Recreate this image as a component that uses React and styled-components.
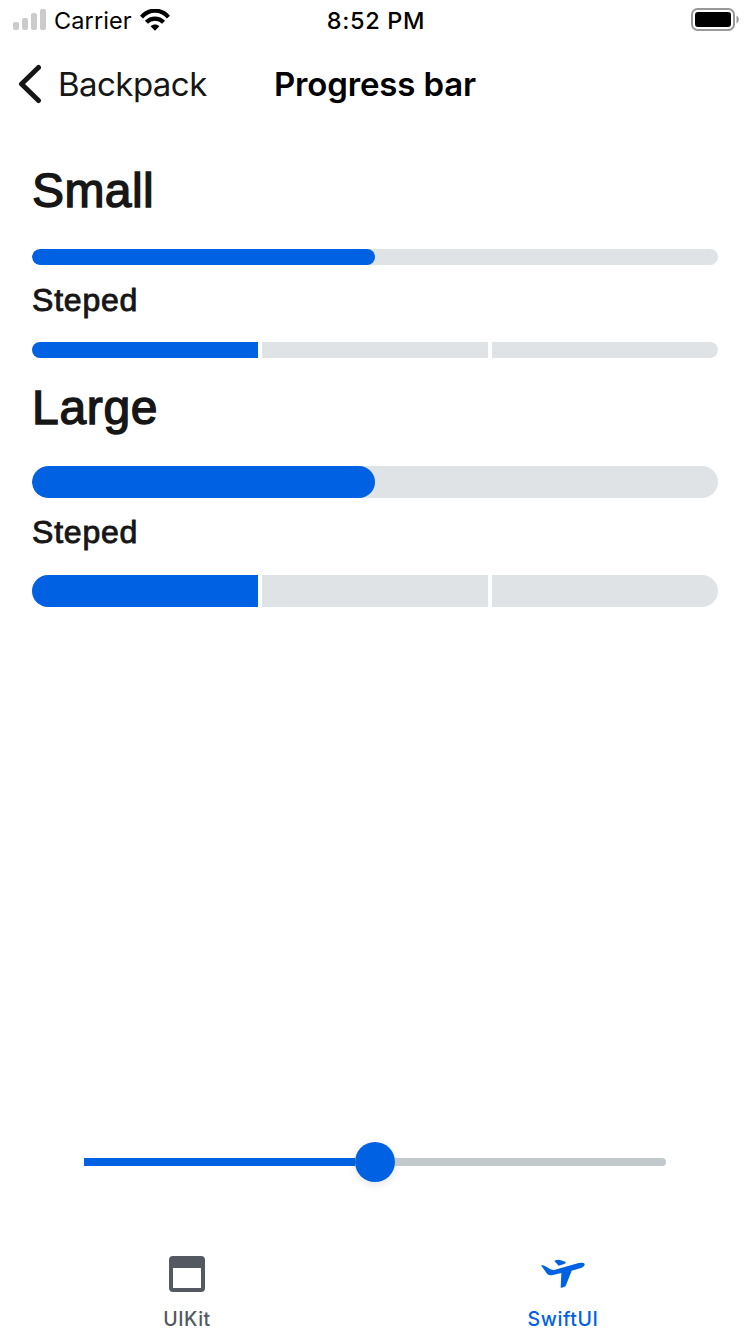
import React from "react";
import styled, { createGlobalStyle } from "styled-components";

const GlobalStyle = createGlobalStyle`
  * { box-sizing: border-box; }
  body { margin: 0; background: #fff; }
`;

const BLUE = "#0062e3";
const INK = "#161616";

const Screen = styled.div`
  width: 750px;
  height: 1334px;
  display: flex;
  flex-direction: column;
  overflow: hidden;
  background: #fff;
  color: ${INK};
  font-family: Inter, "Liberation Sans", sans-serif;
`;

const StatusBar = styled.header`
  height: 40px;
  display: grid;
  grid-template-columns: 1fr auto 1fr;
  align-items: center;
  padding: 0 11px 0 13px;
  color: #000;
`;

const StatusSide = styled.div`
  display: flex;
  align-items: center;
  justify-content: ${(p) => (p.$end ? "flex-end" : "flex-start")};
  padding-bottom: ${(p) => (p.$end ? "1px" : "0")};
`;

const Carrier = styled.span`
  width: 78px;
  margin: 2px 8px 0 7px;
  font-size: 23.5px;
  line-height: 28px;
  letter-spacing: 0.1px;
`;

const Time = styled.span`
  margin-top: 2px;
  font-size: 23.5px;
  line-height: 28px;
  font-weight: 500;
  letter-spacing: 0.65px;
`;

const NavBar = styled.nav`
  height: 88px;
  display: grid;
  grid-template-columns: 1fr auto 1fr;
  align-items: center;
  padding: 0 18px;
`;

const Back = styled.div`
  display: flex;
  align-items: center;
  gap: 16px;
  font-size: 33px;
  line-height: 40px;
  letter-spacing: -0.55px;
`;

const Title = styled.h1`
  margin: 0;
  color: #000;
  font-size: 33px;
  line-height: 40px;
  font-weight: 600;
  letter-spacing: -0.15px;
`;

const Content = styled.main`
  flex: 1;
  display: flex;
  flex-direction: column;
  padding: 31px 32px 0;
  font-family: "Liberation Sans", Arial, sans-serif;
`;

const Heading = styled.h2`
  margin: 0;
  height: 64px;
  font-size: 48px;
  line-height: 64px;
  font-weight: 400;
  letter-spacing: ${(p) => p.$spacing};
  -webkit-text-stroke: 1.4px ${INK};
`;

const Label = styled.h3`
  margin: 0;
  height: 40px;
  font-size: 32px;
  line-height: 40px;
  font-weight: 400;
  letter-spacing: 0.8px;
  -webkit-text-stroke: 0.9px ${INK};
`;

const Group = styled.section`
  display: flex;
  flex-direction: column;
  height: ${(p) => p.$height}px;
`;

const Bar = styled.div`
  width: 686px;
  height: ${(p) => p.$size}px;
  margin: ${(p) => p.$margin};
  display: flex;
  gap: 4px;
  overflow: hidden;
  border-radius: ${(p) => p.$size / 2}px;
  background: ${(p) => (p.$stepped ? "transparent" : "#dfe3e6")};
`;

const Fill = styled.div`
  width: 50%;
  border-radius: inherit;
  background: ${BLUE};
`;

const Step = styled.div`
  flex: 1;
  background: ${(p) => (p.$active ? BLUE : "#dfe3e6")};
`;

const SliderArea = styled.div`
  display: flex;
  align-items: center;
  height: 40px;
  margin: 0 84px 60px;
`;

const TrackOn = styled.div`
  width: 271px;
  height: 8px;
  background: ${BLUE};
`;

const Thumb = styled.div`
  width: 40px;
  height: 40px;
  border-radius: 50%;
  background: ${BLUE};
  box-shadow: 0 2px 10px rgba(0, 0, 0, 0.12);
`;

const TrackOff = styled.div`
  flex: 1;
  height: 8px;
  border-radius: 0 4px 4px 0;
  background: #c1c9cc;
`;

const TabBar = styled.footer`
  height: 92px;
  display: grid;
  grid-template-columns: 1fr 1fr;
  gap: 2px;
`;

const Tab = styled.div`
  display: flex;
  flex-direction: column;
  align-items: center;
  padding-top: 12px;
  color: ${(p) => (p.$active ? BLUE : "#545860")};
`;

const TabIcon = styled.div`
  height: 40px;
  display: flex;
  align-items: center;
`;

const TabLabel = styled.span`
  margin-top: 13px;
  font-size: 19.5px;
  line-height: 24px;
  font-weight: 450;
  letter-spacing: ${(p) => p.$spacing};
`;

function SteppedBar({ size, margin }) {
  return (
    <Bar $size={size} $margin={margin} $stepped>
      <Step $active />
      <Step />
      <Step />
    </Bar>
  );
}

function Signal() {
  return (
    <svg width="34" height="22" viewBox="0 0 34 22" fill="#cbcbcb">
      <rect x="0" y="13" width="6" height="8" rx="2" />
      <rect x="9" y="9" width="6" height="12" rx="2" />
      <rect x="18" y="4" width="6" height="17" rx="2" />
      <rect x="27" y="0" width="6" height="21" rx="2" />
    </svg>
  );
}

function Wifi() {
  return (
    <svg width="30" height="22" viewBox="0 0 30 22">
      <g fill="none" stroke="#000" strokeWidth="4.2">
        <path d="M1.5 8.1C9-.5 21-.5 28.500 8.100" />
        <path d="M6.400 13.300C11.200 8.300 18.800 8.300 23.600 13.300" />
      </g>
      <path d="M10.600 17.200C13.100 14.800 16.900 14.800 19.400 17.200L15 21.700Z" />
    </svg>
  );
}

function Battery() {
  return (
    <svg width="48" height="23" viewBox="0 0 48 23">
      <rect x="1" y="1" width="42" height="21" rx="5.500" fill="#fff" stroke="#999" strokeWidth="2" />
      <rect x="4" y="4" width="36" height="15" rx="3" />
      <path d="M45.500 7.500C48.500 9 48.500 14 45.500 15.500Z" fill="#999" />
    </svg>
  );
}

export default function App() {
  return (
    <Screen>
      <GlobalStyle />
      <StatusBar>
        <StatusSide>
          <Signal />
          <Carrier>Carrier</Carrier>
          <Wifi />
        </StatusSide>
        <Time>8:52 PM</Time>
        <StatusSide $end>
          <Battery />
        </StatusSide>
      </StatusBar>
      <NavBar>
        <Back>
          <svg width="24" height="40" viewBox="0 0 24 40">
            <path d="M20.500 3.500L3.500 20L20.500 36.500" fill="none" stroke={INK} strokeWidth="5" strokeLinecap="round" strokeLinejoin="round" />
          </svg>
          <span>Backpack</span>
        </Back>
        <Title>Progress bar</Title>
      </NavBar>
      <Content>
        <Group $height={217}>
          <Heading $spacing="0.4px">Small</Heading>
          <Bar $size={16} $margin="26px 0 15px">
            <Fill />
          </Bar>
          <Label>Steped</Label>
          <SteppedBar size={16} margin="22px 0 0" />
        </Group>
        <Group $height={250}>
          <Heading $spacing="0.7px">Large</Heading>
          <Bar $size={32} $margin="26px 0 14px">
            <Fill />
          </Bar>
          <Label>Steped</Label>
          <SteppedBar size={32} margin="23px 0 0" />
        </Group>
      </Content>
      <SliderArea>
        <TrackOn />
        <Thumb />
        <TrackOff />
      </SliderArea>
      <TabBar>
        <Tab>
          <TabIcon>
            <svg width="36" height="36" viewBox="0 0 36 36">
              <path fill="currentColor" fillRule="evenodd" d="M4 0H32Q36 0 36 4V32Q36 36 32 36H4Q0 36 0 32V4Q0 0 4 0ZM4 12V32H32V12Z" />
            </svg>
          </TabIcon>
          <TabLabel $spacing="0.5px">UIKit</TabLabel>
        </Tab>
        <Tab $active>
          <TabIcon>
            <svg width="46" height="32" viewBox="91 54 138 96" fill="currentColor">
              <path d="M94 76Q100 74 107 79L123 88Q129 91 136 89L207 69Q222 66 225 72Q226 79 216 83L186 92L169 136Q166 143 153 143L155 99L130 105Q119 108 112 101Z" />
              <path d="M134 63Q142 58 151 60L168 66Q170 70 163 72L147 77Z" />
            </svg>
          </TabIcon>
          <TabLabel $spacing="0.6px">SwiftUI</TabLabel>
        </Tab>
      </TabBar>
    </Screen>
  );
}
